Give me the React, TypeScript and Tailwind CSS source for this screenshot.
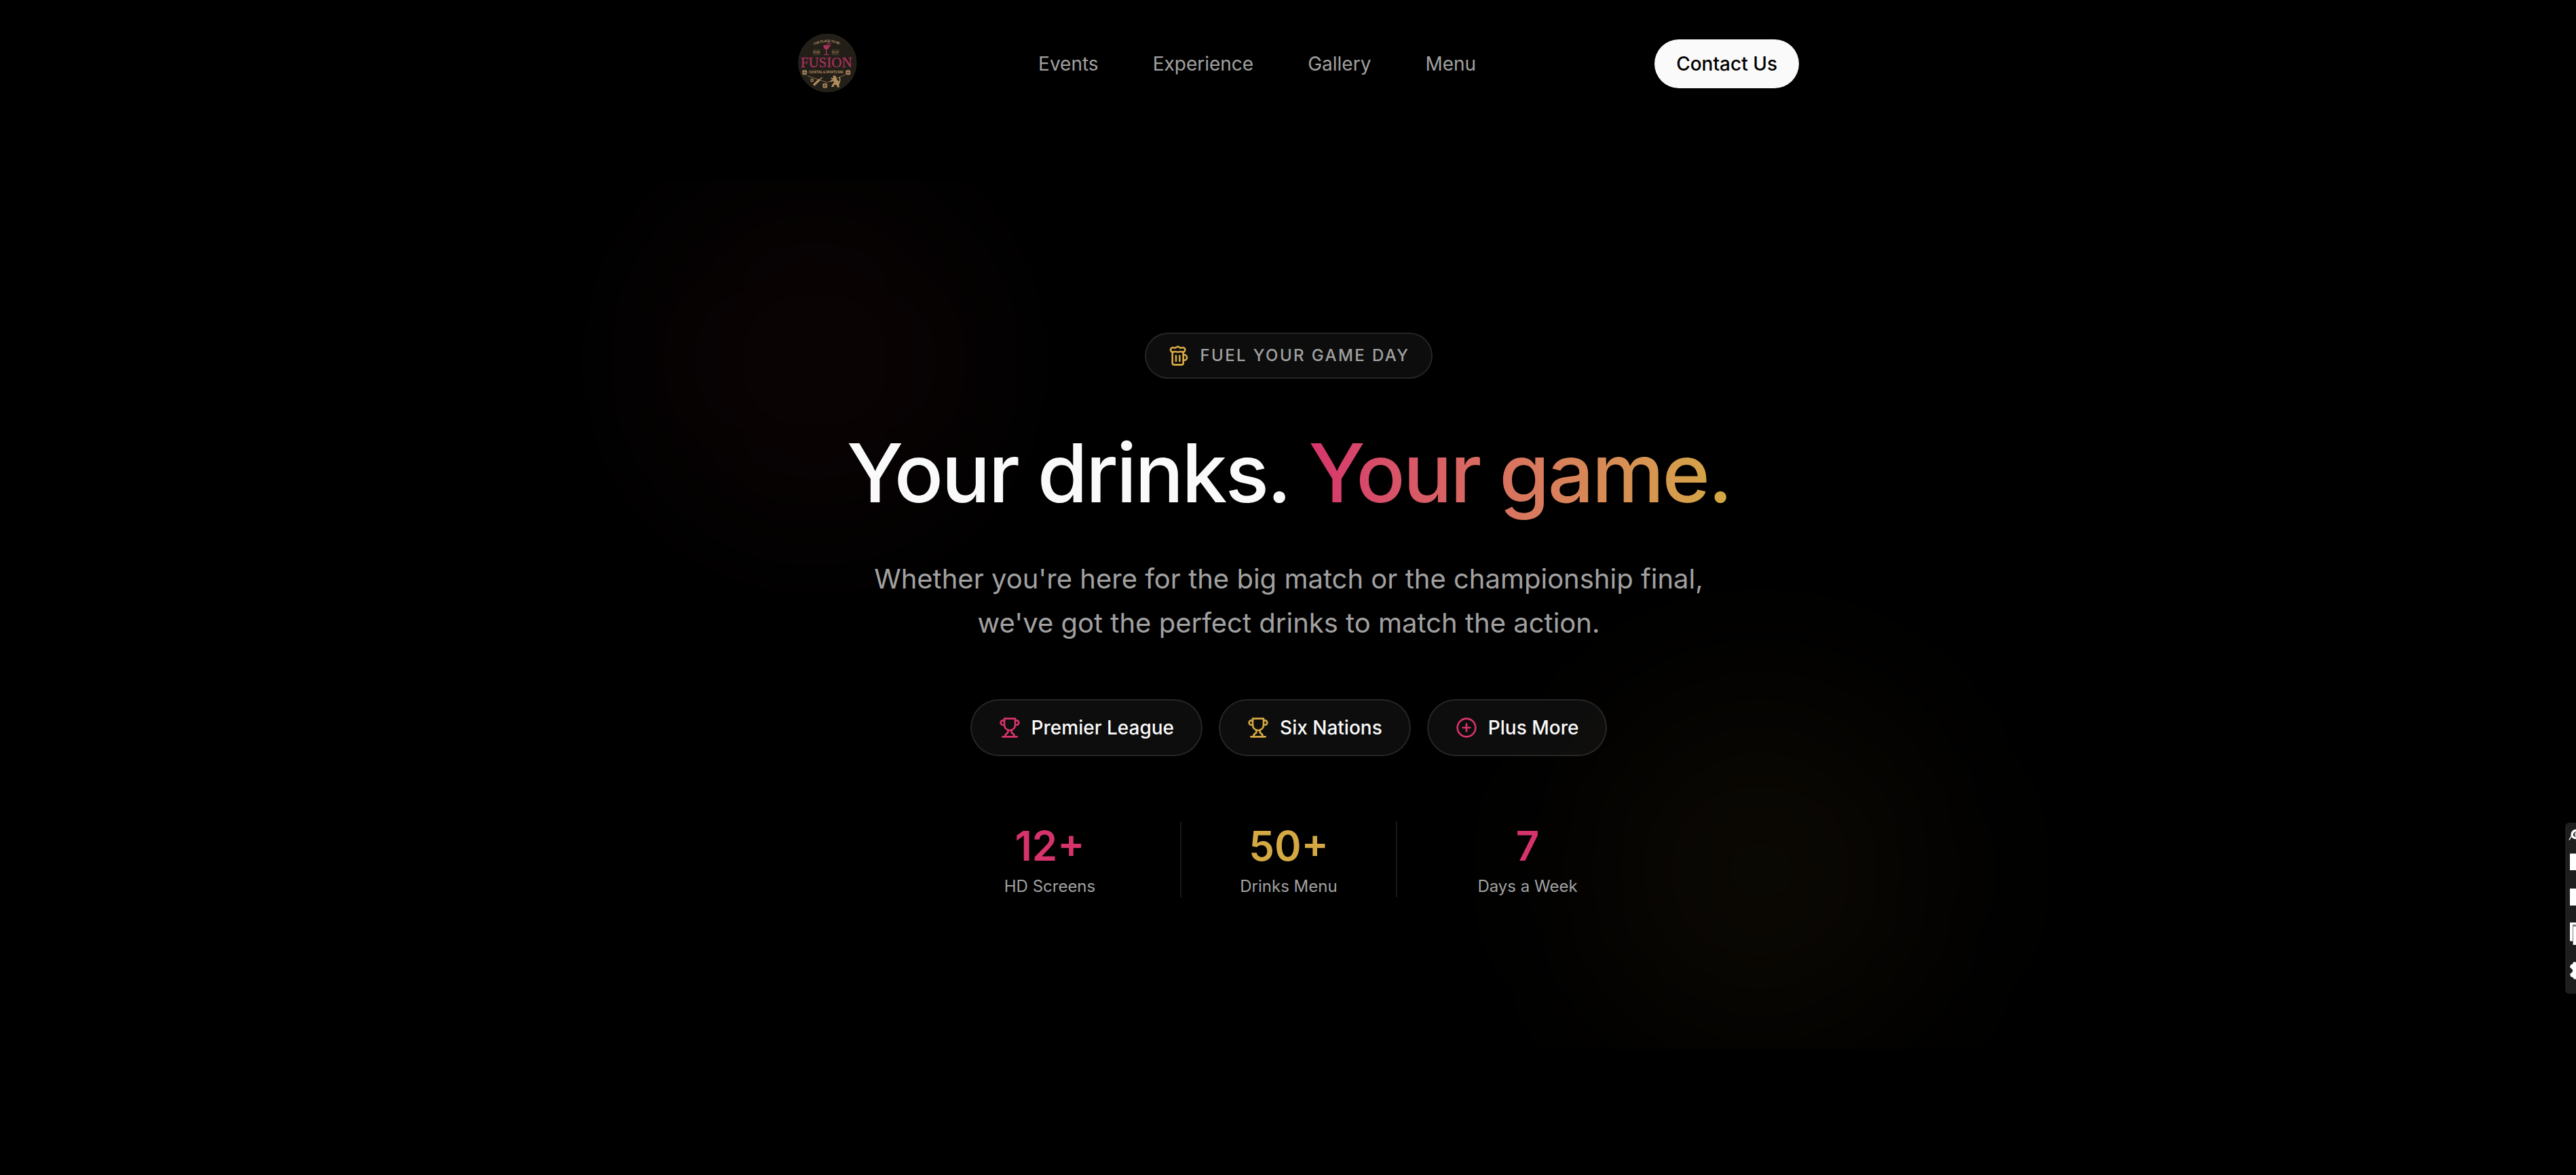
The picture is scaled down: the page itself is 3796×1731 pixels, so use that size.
import { Beer, CirclePlus, type LucideIcon } from "lucide-react";

const NAV_LINKS = ["Events", "Experience", "Gallery", "Menu"];

const STATS = [
  { value: "12+", label: "HD Screens", color: "text-[#d6336c]" },
  { value: "50+", label: "Drinks Menu", color: "text-[#d4a843]" },
  { value: "7", label: "Days a Week", color: "text-[#d6336c]" },
];

function TrophyIcon({ className }: { className?: string }) {
  return (
    <svg
      viewBox="0 0 24 24"
      fill="none"
      stroke="currentColor"
      strokeWidth={2}
      strokeLinecap="round"
      strokeLinejoin="round"
      className={className}
    >
      <path d="M6 9H4.5a2.5 2.5 0 0 1 0-5H6" />
      <path d="M18 9h1.5a2.5 2.5 0 0 0 0-5H18" />
      <path d="M4 22h16" />
      <path d="M10 14.66V17c0 .55-.47.98-.97 1.21C7.85 18.75 7 20.24 7 22" />
      <path d="M14 14.66V17c0 .55.47.98.97 1.21C16.15 18.75 17 20.24 17 22" />
      <path d="M18 2H6v7a6 6 0 0 0 12 0V2Z" />
    </svg>
  );
}

const LEAGUES: {
  name: string;
  icon: LucideIcon | typeof TrophyIcon;
  color: string;
}[] = [
  { name: "Premier League", icon: TrophyIcon, color: "text-[#d6336c]" },
  { name: "Six Nations", icon: TrophyIcon, color: "text-[#d4a843]" },
  { name: "Plus More", icon: CirclePlus, color: "text-[#d6336c]" },
];

function Ball({ x, y, r }: { x: number; y: number; r: number }) {
  return (
    <g transform={`translate(${x} ${y})`}>
      <circle r={r} fill="#b08d5e" />
      <path
        d={`M${-r} 0H${r}M0 ${-r}V${r}`}
        stroke="#2a241c"
        strokeWidth="0.7"
      />
    </g>
  );
}

function Logo() {
  return (
    <svg viewBox="0 0 96 96" className="size-24">
      <defs>
        <path id="arc" d="M27.500 21.500Q48.500 10.500 69 21.500" />
      </defs>
      <circle cx="48.3" cy="46.7" r="43" fill="#221e18" />
      <circle
        cx="48.3"
        cy="46.7"
        r="42.6"
        fill="none"
        stroke="#2e2a22"
        strokeWidth="0.8"
      />
      <text
        fontFamily="Roboto"
        fontWeight="700"
        fontSize="5"
        fill="#a88a60"
        textLength="41"
      >
        <textPath href="#arc">·THE PLACE TO BE·</textPath>
      </text>
      <g fontFamily="Roboto" fontWeight="700" fontSize="5" fill="#8f7650">
        <text x="27" y="33" textLength="10.5" lengthAdjust="spacingAndGlyphs">
          DRINK
        </text>
        <text x="54.7" y="33" textLength="10.7" lengthAdjust="spacingAndGlyphs">
          ENJOY
        </text>
      </g>
      <path
        d="M27 27.700h10.500M27 34.700h10.500M54.700 27.700h11M54.700 34.700h11"
        stroke="#6f5c40"
        strokeWidth="0.6"
      />
      {/* cocktail glass */}
      <path
        d="M42.300 20.500C42.300 24.500 44 26.800 46.700 27.200C49.500 26.800 51.300 24.500 51.300 20.500Z"
        fill="#a8325c"
      />
      <path d="M46.700 26V34" stroke="#a8325c" strokeWidth="1.3" />
      <path d="M43.300 34.500H50" stroke="#a8325c" strokeWidth="1.3" />
      <path
        d="M48.500 20.500C47.500 17.500 51 15.500 52.300 18C53.300 20 51.500 21.500 50.500 23"
        fill="none"
        stroke="#a8325c"
        strokeWidth="1.2"
      />
      <text
        x="8.7"
        y="53"
        fontFamily="Liberation Serif"
        fontSize="21.5"
        fill="#a8325c"
        stroke="#a8325c"
        strokeWidth="0.3"
        textLength="76"
        lengthAdjust="spacingAndGlyphs"
      >
        FUSION
      </text>
      <text
        x="21"
        y="62.3"
        fontFamily="Roboto"
        fontWeight="700"
        fontSize="6"
        fill="#b08d5e"
        textLength="50.5"
        lengthAdjust="spacingAndGlyphs"
      >
        COCKTAIL &amp; SPORTS BAR
      </text>
      <Ball x={14.7} y={60.8} r={3.7} />
      <Ball x={78.7} y={60.7} r={3.8} />
      <Ball x={25.7} y={72.3} r={2.5} />
      <Ball x={44.7} y={80.3} r={3.7} />
      <path
        d="M18.700 65.700L48 75.500L74.700 64"
        fill="none"
        stroke="#a08055"
        strokeWidth="0.8"
      />
      {/* cricket bat */}
      <path d="M28 79.500L36.500 71.500" stroke="#b08d5e" strokeWidth="3.2" />
      <path d="M36.500 71.500L40.500 68" stroke="#b08d5e" strokeWidth="1.4" />
      {/* rampant lion */}
      <path
        transform="translate(-0.8 2)"
        d="M57 64L60.500 63L62 65.500L63 69L66 72L67 70L66 66L67.500 65L68.500 70L67 75L66 78L67.500 80.500H63.500L62.500 77L59 77L58.500 80H54.500L56.500 76L59 73L57.500 71.500L54 73L53 71.500L57 69L54 68L54.500 66.500L58 67Z"
        fill="#b08d5e"
      />
    </svg>
  );
}

function Header() {
  return (
    <header className="h-[188px]">
      <div className="mx-auto flex h-full w-[1506px] items-center justify-between pl-[26px]">
        <Logo />
        <nav className="flex gap-20 text-[28px] leading-10 text-[#a1a1a1]">
          {NAV_LINKS.map((link) => (
            <a key={link}>{link}</a>
          ))}
        </nav>
        <button className="rounded-full bg-neutral-50 px-8 py-4 text-[28px] leading-10 font-medium text-black">
          Contact Us
        </button>
      </div>
    </header>
  );
}

function Hero() {
  return (
    <section className="relative mt-[78px] flex h-[1280px] items-center justify-center overflow-hidden pl-0.5">
      <div className="absolute top-[25px] left-[961px] size-[480px] rounded-full bg-[#d63348]/5 blur-[120px]" />
      <div className="absolute top-[757px] left-[2335px] size-[520px] rounded-full bg-[#d49a33]/5 blur-[120px]" />

      <div className="relative flex flex-col items-center">
        <div className="flex items-center gap-4 rounded-full border-2 border-white/10 bg-white/5 px-8 py-4">
          <Beer className="size-8 text-[#d4a843]" />
          <span className="text-2xl leading-8 font-medium tracking-widest text-[#a1a1a1] uppercase">
            Fuel your game day
          </span>
        </div>

        <h1 className="mt-16 text-[120px] leading-tight font-medium tracking-tight text-neutral-50">
          Your drinks.{" "}
          <span className="bg-linear-to-r from-[#d6336c] to-[#d4a843] bg-clip-text text-transparent">
            Your game.
          </span>
        </h1>

        <p className="mt-12 text-center text-[40px] leading-relaxed text-[#a1a1a1]">
          Whether you're here for the big match or the championship final,
          <br />
          we've got the perfect drinks to match the action.
        </p>

        <div className="mt-20 flex gap-6">
          {LEAGUES.map(({ name, icon: Icon, color }) => (
            <div
              key={name}
              className="flex items-center gap-4 rounded-full border-2 border-white/10 bg-white/5 px-10 py-5"
            >
              <Icon className={`size-8 ${color}`} />
              <span className="text-[28px] leading-10 font-medium text-neutral-50">
                {name}
              </span>
            </div>
          ))}
        </div>

        <div className="mt-24 grid w-[1024px] grid-cols-3 gap-8 text-center">
          {STATS.map(({ value, label, color }) => (
            <div
              key={label}
              className="nth-2:border-x-2 nth-2:border-white/10"
            >
              <p className={`text-6xl leading-[72px] font-semibold ${color}`}>
                {value}
              </p>
              <p className="mt-2 text-2xl leading-8 text-[#a1a1a1]">{label}</p>
            </div>
          ))}
        </div>
      </div>
    </section>
  );
}

function SideToolbar() {
  return (
    <div className="absolute top-[1212px] right-0 h-[252px] w-4 overflow-hidden rounded-l-md bg-[#1e1e1e]">
      <svg viewBox="0 0 16 252" className="h-full w-full" fill="#fff">
        <path d="M6 25.500L9 20" stroke="#fff" strokeWidth="1.5" />
        <path
          d="M16 11.500A6 6 0 0 0 11 20.500Q13 22.500 16 22.500"
          fill="none"
          stroke="#fff"
          strokeWidth="3.4"
        />
        <path
          d="M16 14.500A3 3 0 0 0 16 19.500"
          fill="none"
          stroke="#fff"
          strokeWidth="1.5"
        />
        <path d="M7 45.500h9V70H7zM7 97h9v25H7z" />
        <path d="M7 147h9v3.500h-5V174.500H7z" />
        <path d="M16 151.500h-4.500V180" stroke="#777" fill="none" />
        <path d="M12 152.500h4V180h-4z" />
        <path d="M16 205.500L12.500 205L11 208L8 209.500L7 213L11 216.500V219.500L7 223L8.500 227L11.500 228L13 230.500L16 230.500Z" />
      </svg>
    </div>
  );
}

export default function App() {
  return (
    <div className="relative h-[1731px] overflow-hidden bg-black font-['Inter',sans-serif]">
      <Header />
      <Hero />
      <SideToolbar />
    </div>
  );
}
